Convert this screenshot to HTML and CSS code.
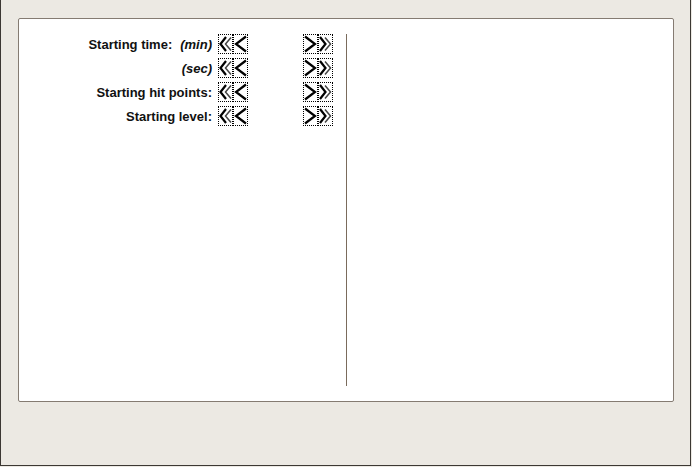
FILE: index.html
```html
<!DOCTYPE html>
<html>
<head>
<meta charset="utf-8">
<link rel="stylesheet" href="styles.css">
</head>
<body>
<div class="frame">
  <div class="panel">
    <div class="left">
      <div class="row">
        <div class="label"><span>Starting time:</span><span class="unit">(min)</span></div>
        <div class="btn"><svg viewBox="0 0 13 18" width="13" height="18"><polyline points="7,2 1.5,9 7,16" class="dk"/><polyline points="12,2.5 6.5,9 12,15.5" class="lt"/></svg></div>
        <div class="btn"><svg viewBox="0 0 13 18" width="13" height="18"><polyline points="12,1.5 2,9 12,16.5" class="dk"/></svg></div>
        <div class="val"></div>
        <div class="btn"><svg viewBox="0 0 13 18" width="13" height="18"><polyline points="1,1.5 11,9 1,16.5" class="dk"/></svg></div>
        <div class="btn"><svg viewBox="0 0 13 18" width="13" height="18"><polyline points="1,2 6.5,9 1,16" class="dk"/><polyline points="6,2.5 11.5,9 6,15.5" class="lt"/></svg></div>
      </div>
      <div class="row">
        <div class="label"><span class="unit">(sec)</span></div>
        <div class="btn"><svg viewBox="0 0 13 18" width="13" height="18"><polyline points="7,2 1.5,9 7,16" class="dk"/><polyline points="12,2.5 6.5,9 12,15.5" class="lt"/></svg></div>
        <div class="btn"><svg viewBox="0 0 13 18" width="13" height="18"><polyline points="12,1.5 2,9 12,16.5" class="dk"/></svg></div>
        <div class="val"></div>
        <div class="btn"><svg viewBox="0 0 13 18" width="13" height="18"><polyline points="1,1.5 11,9 1,16.5" class="dk"/></svg></div>
        <div class="btn"><svg viewBox="0 0 13 18" width="13" height="18"><polyline points="1,2 6.5,9 1,16" class="dk"/><polyline points="6,2.5 11.5,9 6,15.5" class="lt"/></svg></div>
      </div>
      <div class="row">
        <div class="label"><span>Starting hit points:</span></div>
        <div class="btn"><svg viewBox="0 0 13 18" width="13" height="18"><polyline points="7,2 1.5,9 7,16" class="dk"/><polyline points="12,2.5 6.5,9 12,15.5" class="lt"/></svg></div>
        <div class="btn"><svg viewBox="0 0 13 18" width="13" height="18"><polyline points="12,1.5 2,9 12,16.5" class="dk"/></svg></div>
        <div class="val"></div>
        <div class="btn"><svg viewBox="0 0 13 18" width="13" height="18"><polyline points="1,1.5 11,9 1,16.5" class="dk"/></svg></div>
        <div class="btn"><svg viewBox="0 0 13 18" width="13" height="18"><polyline points="1,2 6.5,9 1,16" class="dk"/><polyline points="6,2.5 11.5,9 6,15.5" class="lt"/></svg></div>
      </div>
      <div class="row">
        <div class="label"><span>Starting level:</span></div>
        <div class="btn"><svg viewBox="0 0 13 18" width="13" height="18"><polyline points="7,2 1.5,9 7,16" class="dk"/><polyline points="12,2.5 6.5,9 12,15.5" class="lt"/></svg></div>
        <div class="btn"><svg viewBox="0 0 13 18" width="13" height="18"><polyline points="12,1.5 2,9 12,16.5" class="dk"/></svg></div>
        <div class="val"></div>
        <div class="btn"><svg viewBox="0 0 13 18" width="13" height="18"><polyline points="1,1.5 11,9 1,16.5" class="dk"/></svg></div>
        <div class="btn"><svg viewBox="0 0 13 18" width="13" height="18"><polyline points="1,2 6.5,9 1,16" class="dk"/><polyline points="6,2.5 11.5,9 6,15.5" class="lt"/></svg></div>
      </div>
    </div>
    <div class="divider"></div>
    <div class="right"></div>
  </div>
</div>
</body>
</html>
```

FILE: styles.css
```css
html, body {
  margin: 0;
  padding: 0;
  background: #ece9e3;
}
body {
  width: 692px;
  height: 467px;
  overflow: hidden;
  font-family: "Liberation Sans", Arial, sans-serif;
}
.frame {
  box-sizing: border-box;
  width: 691px;
  height: 466px;
  border-left: 1px solid #3c3833;
  border-right: 1px solid #3c3833;
  border-bottom: 1px solid #3c3833;
  padding: 18px 16px 0 17px;
}
.panel {
  box-sizing: border-box;
  width: 656px;
  height: 384px;
  background: #fff;
  border: 1px solid #857b72;
  border-radius: 2px;
  display: flex;
  padding: 15px 0 15px 0;
}
.left {
  width: 327px;
  display: flex;
  flex-direction: column;
  gap: 4px;
}
.row {
  display: flex;
  align-items: center;
  height: 20px;
}
.label {
  width: 199px;
  display: flex;
  justify-content: flex-end;
  gap: 8px;
  font-weight: bold;
  font-size: 13px;
  color: #111;
  padding-right: 6px;
  box-sizing: border-box;
}
.unit {
  font-style: italic;
}
.btn {
  box-sizing: border-box;
  width: 15px;
  height: 20px;
  border: 1px dotted #000;
  display: flex;
  align-items: center;
  justify-content: center;
}
.btn svg {
  display: block;
}
.dk {
  fill: none;
  stroke: #000;
  stroke-width: 2.2;
}
.lt {
  fill: none;
  stroke: #444;
  stroke-width: 1.5;
}
.val {
  width: 55px;
}
.divider {
  width: 1px;
  margin-top: 0;
  background: #7a6b5c;
}
.right {
  flex: 1;
}
```
